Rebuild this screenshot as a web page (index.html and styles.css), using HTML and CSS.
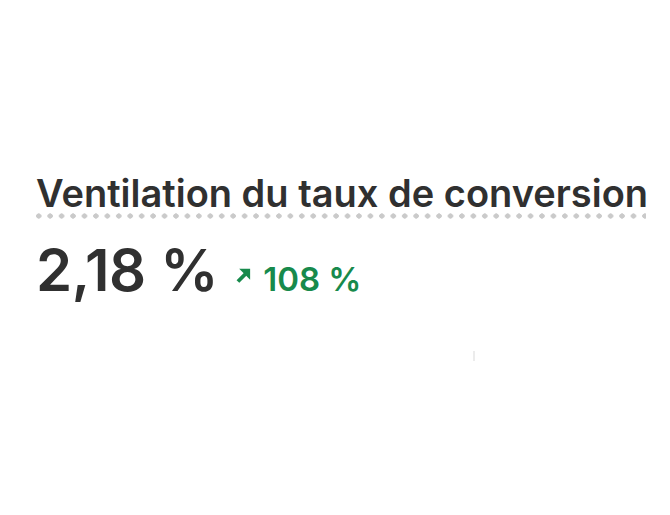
FILE: index.html
```html
<!DOCTYPE html>
<html lang="fr">
<head>
<meta charset="utf-8">
<link rel="stylesheet" href="styles.css">
</head>
<body>
<div class="card">
  <h2 class="title">Ventilation du taux de conversion</h2>
  <div class="metric">
    <span class="value">2,18 %</span>
    <span class="delta"><svg class="arrow" viewBox="0 0 14 14" width="14" height="14"><path d="M1.8 12.6 L9.5 4.9" fill="none" stroke="currentColor" stroke-width="3.6"/><path d="M3 0.8 H13.2 V11 Z" fill="currentColor"/></svg>108 %</span>
  </div>
  <div class="tick"></div>
</div>
</body>
</html>
```
FILE: styles.css
```css
html, body { margin: 0; padding: 0; background: #fff; }
body { font-family: Inter, "Noto Sans", sans-serif; color: #303030; }
.card { padding: 170px 0 0 36px; width: 610px; }
.title {
  margin: 0;
  font-size: 38px;
  font-weight: 600;
  line-height: 46px;
  letter-spacing: 0;
  color: #303030;
  white-space: nowrap;
  padding-bottom: 3px;
  background-image: radial-gradient(circle, #cacaca 2.4px, transparent 2.9px);
  background-size: 11.45px 6px;
  background-repeat: repeat-x;
  background-position: -3px bottom;
}
.metric { display: flex; align-items: baseline; gap: 18px; margin-top: 18px; }
.value { font-size: 58px; font-weight: 600; line-height: 66px; letter-spacing: -0.3px; }
.delta { display: inline-block; color: #178a4c; font-size: 33px; font-weight: 600; white-space: nowrap; }
.arrow { display: inline-block; vertical-align: baseline; width: 15px; height: 15px; margin: 0 12px 8px 0; }
.tick { width: 2px; height: 10px; background: #ececec; margin: 48px 0 0 437px; }
```
